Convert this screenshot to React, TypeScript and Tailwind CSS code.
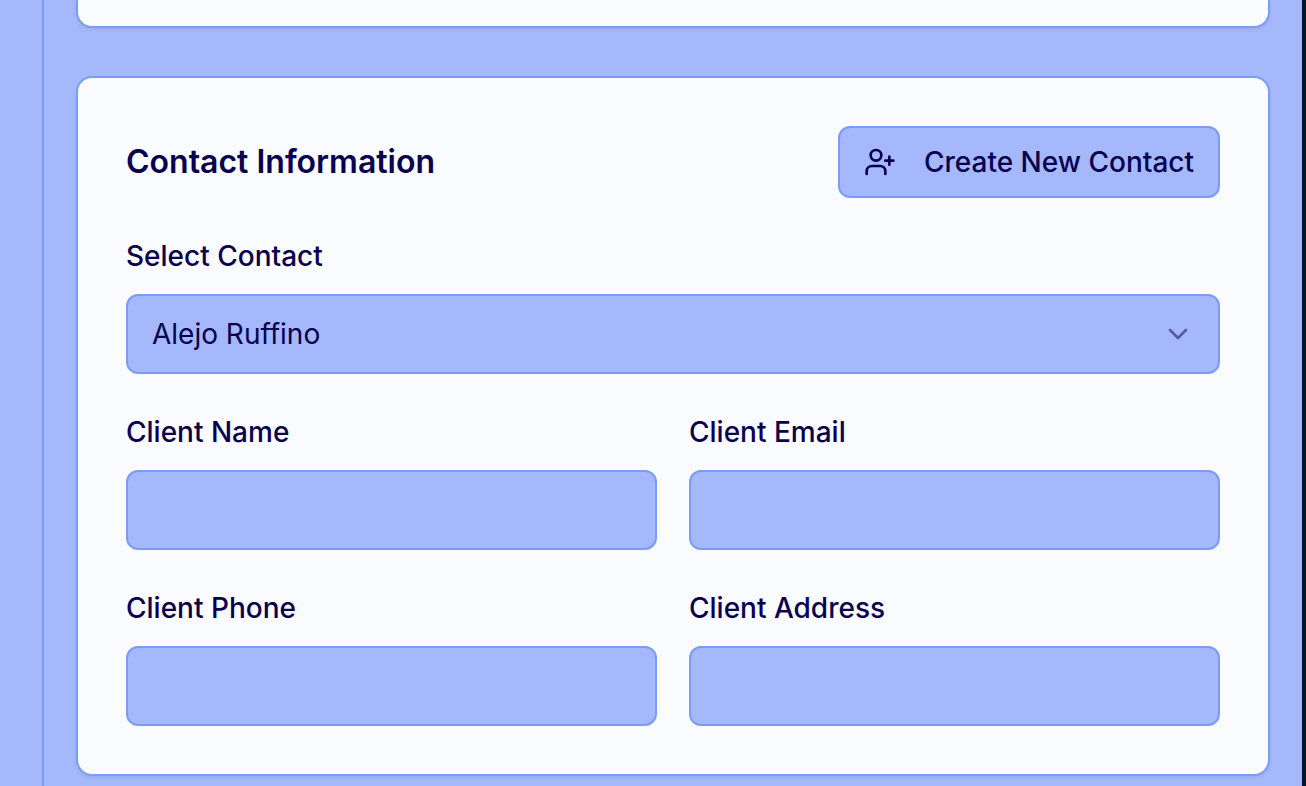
import React from "react";
import { ChevronDown, UserPlus } from "lucide-react";

const fieldClass =
  "h-20 w-full rounded-xl border-2 border-[#7c9bf6] bg-[#a4b8fb] px-6 text-[28px] leading-10 text-[#09004f] outline-none";

const labelClass = "text-[28px] leading-13 font-medium";

function Field({ id, label, type = "text" }: { id: string; label: string; type?: string }) {
  return (
    <div className="flex flex-col gap-3">
      <label htmlFor={id} className={labelClass}>
        {label}
      </label>
      <input id={id} type={type} className={fieldClass} />
    </div>
  );
}

export default function App() {
  return (
    <div className="flex h-screen overflow-hidden bg-[#a4b8fb] font-['Inter',sans-serif] text-[#09004f]">
      <div className="w-11 shrink-0 border-r-2 border-[#7c9bf6]" />
      <main className="flex min-w-0 flex-1 flex-col gap-12 px-8">
        <section className="h-7 shrink-0 rounded-b-2xl border-2 border-t-0 border-[#7c9bf6] bg-[#fafbff] shadow-[0_2px_4px_rgba(0,0,0,0.06)]" />
        <section className="flex shrink-0 flex-col gap-8 rounded-2xl border-2 border-[#7c9bf6] bg-[#fafbff] p-12 shadow-[0_2px_4px_rgba(0,0,0,0.06)]">
          <header className="flex items-center justify-between">
            <h2 className="text-[32px] leading-12 font-semibold">Contact Information</h2>
            <button
              type="button"
              className="flex h-18 items-center gap-7 rounded-xl border-2 border-[#7c9bf6] bg-[#a4b8fb] px-6 text-[28px] font-medium"
            >
              <UserPlus size={32} />
              Create New Contact
            </button>
          </header>
          <div className="flex flex-col gap-3">
            <label htmlFor="contact" className={labelClass}>
              Select Contact
            </label>
            <div className="grid items-center">
              <select id="contact" className={`${fieldClass} col-start-1 row-start-1 appearance-none`}>
                <option>Alejo Ruffino</option>
              </select>
              <ChevronDown
                size={32}
                className="pointer-events-none col-start-1 row-start-1 mr-[26px] justify-self-end opacity-50"
              />
            </div>
          </div>
          <div className="grid grid-cols-2 gap-8">
            <Field id="name" label="Client Name" />
            <Field id="email" label="Client Email" type="email" />
            <Field id="phone" label="Client Phone" type="tel" />
            <Field id="address" label="Client Address" />
          </div>
        </section>
      </main>
      <div className="w-1 shrink-0 bg-[#081226]" />
    </div>
  );
}
